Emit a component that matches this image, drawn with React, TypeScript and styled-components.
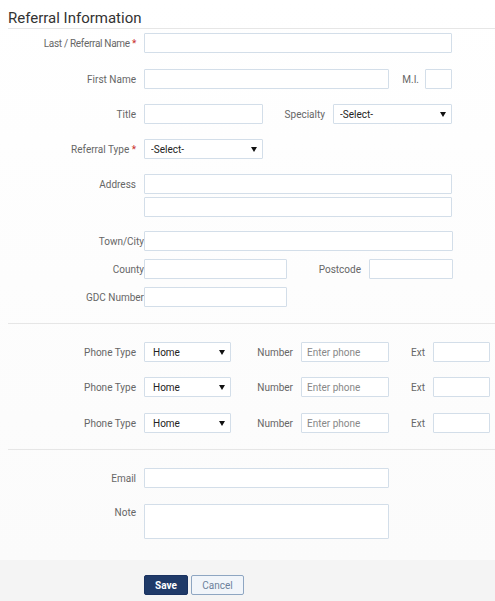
import React from 'react';
import styled, { createGlobalStyle } from 'styled-components';

const GlobalStyle = createGlobalStyle`
  html, body {
    margin: 0;
    padding: 0;
    background: #fff;
    font-family: Roboto, "Liberation Sans", Arial, sans-serif;
  }
`;

const arrow =
  "data:image/svg+xml;utf8,<svg xmlns='http://www.w3.org/2000/svg' width='6' height='5'><path d='M0 0h6L3 5z' fill='%23111'/></svg>";

export default function App() {
  const phones = [0, 1, 2];
  return (
    <Page>
      <GlobalStyle />
      <Body>
        <Title>Referral Information</Title>

        <Row $mt={4}>
          <Label $narrow>
            Last / Referral Name <Req>*</Req>
          </Label>
          <Field $w={308} />
        </Row>

        <Row $mt={16}>
          <Label>First Name</Label>
          <Field $w={245} />
          <SideLabel $w={36} $pr={6}>M.I.</SideLabel>
          <Field $w={27} />
        </Row>

        <Row $mt={15}>
          <Label>Title</Label>
          <Field $w={119} />
          <SideLabel $w={70}>Specialty</SideLabel>
          <Select $w={119}>
            <option>-Select-</option>
          </Select>
        </Row>

        <Row $mt={15}>
          <Label>
            Referral Type <Req>*</Req>
          </Label>
          <Select $w={119}>
            <option>-Select-</option>
          </Select>
        </Row>

        <Row $mt={15}>
          <Label>Address</Label>
          <Field $w={308} />
        </Row>
        <Row $mt={3}>
          <Label />
          <Field $w={308} />
        </Row>

        <Row $mt={14}>
          <Label $tight>Town/City</Label>
          <Field $w={309} />
        </Row>
        <Row $mt={8}>
          <Label $tight>County</Label>
          <Field $w={143} />
          <SideLabel $w={82}>Postcode</SideLabel>
          <Field $w={84} />
        </Row>
        <Row $mt={8}>
          <Label $tight>GDC Number</Label>
          <Field $w={143} />
        </Row>

        <Divider $mt={16} />

        {phones.map((p) => (
          <Row key={p} $mt={p === 0 ? 18 : p === 1 ? 15 : 16}>
            <Label>Phone Type</Label>
            <Select $w={87} $pl={8}>
              <option>Home</option>
            </Select>
            <SideLabel $w={70}>Number</SideLabel>
            <Field $w={88} placeholder="Enter phone" />
            <SideLabel $w={44}>Ext</SideLabel>
            <Field $w={57} />
          </Row>
        ))}

        <Divider $mt={16} />

        <Row $mt={18}>
          <Label>Email</Label>
          <Field $w={245} />
        </Row>
        <Row $mt={16} $top>
          <Label $top>Note</Label>
          <Note />
        </Row>
      </Body>

      <Footer>
        <SaveButton>Save</SaveButton>
        <CancelButton>Cancel</CancelButton>
      </Footer>
    </Page>
  );
}

const Page = styled.div`
  width: 495px;
  height: 601px;
  display: flex;
  flex-direction: column;
  overflow: hidden;
`;

const Body = styled.div`
  flex: 1;
  padding-left: 8px;
  background: linear-gradient(#fff, #fbfbfb);
`;

const Title = styled.h1`
  margin: 0;
  padding-top: 8px;
  height: 20px;
  line-height: 20px;
  font-size: 15px;
  font-weight: 400;
  color: #333;
  border-bottom: 1px solid #e6e6e6;
`;

const Row = styled.div<{ $mt: number; $top?: boolean }>`
  display: flex;
  align-items: ${(p) => (p.$top ? 'flex-start' : 'center')};
  margin-top: ${(p) => p.$mt}px;
  height: ${(p) => (p.$top ? 'auto' : '20px')};
`;

const Label = styled.label<{ $tight?: boolean; $top?: boolean; $narrow?: boolean }>`
  width: ${(p) => (p.$tight ? 136 : 128)}px;
  padding-right: ${(p) => (p.$tight ? 0 : 8)}px;
  padding-top: ${(p) => (p.$top ? 3 : 0)}px;
  text-align: right;
  font-size: 10px;
  letter-spacing: ${(p) => (p.$narrow ? '-0.3px' : '0')};
  color: #666;
  white-space: nowrap;
`;

const SideLabel = styled.label<{ $w: number; $pr?: number }>`
  width: ${(p) => p.$w - (p.$pr ?? 8)}px;
  padding-right: ${(p) => p.$pr ?? 8}px;
  text-align: right;
  font-size: 10px;
  color: #666;
  white-space: nowrap;
`;

const Req = styled.span`
  color: #c9302c;
`;

const Field = styled.input<{ $w: number }>`
  box-sizing: border-box;
  width: ${(p) => p.$w}px;
  height: 20px;
  margin: 0;
  padding: 0 5px;
  border: 1px solid #d3dee9;
  border-radius: 1px;
  background: #fff;
  font-family: inherit;
  font-size: 10px;
  color: #333;
  outline: none;
  &::placeholder {
    color: #888;
  }
`;

const Select = styled.select<{ $w: number; $pl?: number }>`
  box-sizing: border-box;
  width: ${(p) => p.$w}px;
  height: 20px;
  margin: 0;
  padding: 0 0 0 ${(p) => p.$pl ?? 6}px;
  border: 1px solid #d3dee9;
  border-radius: 1px;
  appearance: none;
  background: #fff url("${arrow}") no-repeat right 5px center;
  font-family: inherit;
  font-size: 10px;
  color: #222;
  outline: none;
`;

const Note = styled.textarea`
  box-sizing: border-box;
  width: 245px;
  height: 35px;
  margin: 0;
  border: 1px solid #d3dee9;
  border-radius: 1px;
  resize: none;
  outline: none;
`;

const Divider = styled.hr<{ $mt: number }>`
  margin: ${(p) => p.$mt}px 0 0 0;
  border: 0;
  border-top: 1px solid #e6e6e6;
`;

const Footer = styled.div`
  height: 41px;
  box-sizing: border-box;
  padding: 15px 0 0 144px;
  display: flex;
  align-items: flex-start;
  gap: 3px;
  background: #f4f4f4;
`;

const SaveButton = styled.button`
  box-sizing: border-box;
  width: 44px;
  height: 20px;
  border: 1px solid #1a3260;
  border-radius: 2px;
  background: #1f3a68;
  color: #fff;
  font-family: inherit;
  font-size: 10px;
  font-weight: 700;
  padding: 0;
`;

const CancelButton = styled.button`
  box-sizing: border-box;
  width: 53px;
  height: 20px;
  border: 1px solid #8ea6c2;
  border-radius: 2px;
  background: #f1f5fa;
  color: #6c819b;
  font-family: inherit;
  font-size: 10px;
  padding: 0;
`;
